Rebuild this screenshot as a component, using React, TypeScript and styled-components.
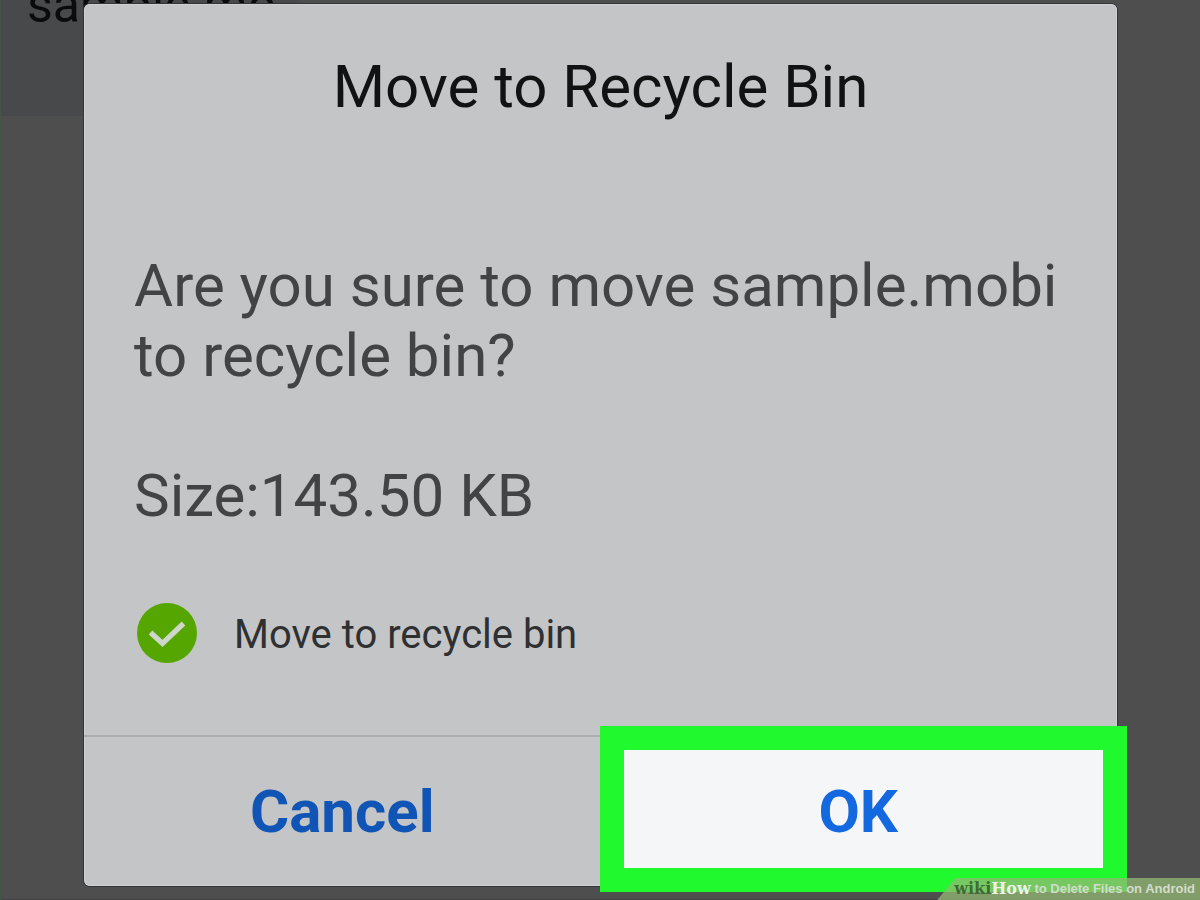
import React from "react";
import styled, { createGlobalStyle } from "styled-components";

const GlobalStyle = createGlobalStyle`
  * { box-sizing: border-box; }
  body {
    margin: 0;
    background: #4e4e4e;
    font-family: Roboto, "Liberation Sans", sans-serif;
  }
`;

const Screen = styled.div`
  position: relative;
  min-height: 100vh;
  padding: 4px 83px 13px 84px;
  overflow: hidden;
  box-shadow: inset 0 -1px 0 #434345;
`;

const FileCard = styled.div`
  position: absolute;
  top: 0;
  left: 0;
  width: 300px;
  height: 116px;
  border-left: 1px solid #56705a;
  background: #48494b;
  overflow: hidden;
`;

const FileName = styled.span`
  position: absolute;
  left: 26px;
  top: -24px;
  color: #0b0b0c;
  font-size: 50px;
  line-height: 58px;
  white-space: nowrap;
`;

const LeftEdge = styled.div`
  position: absolute;
  inset: 0 auto 0 0;
  width: 1px;
  background: #465448;
`;

const Dialog = styled.section`
  position: relative;
  border-radius: 6px;
  background: #c4c5c7;
  box-shadow: inset 0 0 0 1px #cfd0d1, 0 0 0 1px #343537;
`;

const Title = styled.h1`
  margin: 0;
  padding: 48px 24px 0;
  color: #121213;
  font-size: 60px;
  font-weight: 400;
  line-height: 70px;
  text-align: center;
`;

const Body = styled.div`
  padding: 129px 48px 70px 50px;
`;

const Message = styled.p`
  margin: 0 0 70px;
  color: #424345;
  font-size: 60px;
  line-height: 70px;
`;

const CheckRow = styled.label`
  display: flex;
  align-items: center;
  gap: 37px;
  height: 64px;
  padding-left: 3px;
  color: #2f3032;
  font-size: 40px;
  line-height: 58px;
`;

const CheckText = styled.span`
  padding-top: 4px;
`;

const CheckMark = styled.span`
  position: relative;
  width: 60px;
  height: 60px;
  flex: none;

  svg {
    position: absolute;
    inset: 0;
    pointer-events: none;
  }
`;

const CheckInput = styled.input`
  appearance: none;
  display: block;
  width: 60px;
  height: 60px;
  margin: 0;
  border-radius: 50%;
  background: #55a600;
`;

const Actions = styled.div`
  display: grid;
  grid-template-columns: 1fr 1fr;
  height: 151px;
  border-top: 2px solid #adaeb0;
`;

const ActionButton = styled.button<{ $highlighted?: boolean }>`
  padding: ${(p) => (p.$highlighted ? "6px 10px 0 0" : "0")};
  border: ${(p) => (p.$highlighted ? "24px solid #20f92d" : "0")};
  margin: ${(p) => (p.$highlighted ? "-11px -10px -6px -1px" : "0")};
  background: ${(p) => (p.$highlighted ? "#f4f6f8" : "transparent")};
  color: ${(p) => (p.$highlighted ? "#1468e0" : "#1054b6")};
  font-family: inherit;
  font-size: 60px;
  font-weight: 700;
  line-height: 70px;
`;

const Caption = styled.footer`
  position: absolute;
  right: 0;
  bottom: 0;
  height: 22px;
  padding: 0 5px 0 17px;
  display: flex;
  align-items: center;
  background: rgba(147, 184, 116, 0.75);
  clip-path: polygon(18px 0, 100% 0, 100% 100%, 0 100%);
  color: #d3dcca;
  font-family: "Liberation Sans", Arial, sans-serif;
  font-size: 13px;
  font-weight: 700;
  line-height: 22px;
  white-space: pre;
`;

const Brand = styled.span<{ $light?: boolean }>`
  color: ${(p) => (p.$light ? "#eef3e9" : "#3f6b35")};
  font-family: "DejaVu Serif", serif;
  font-size: 16px;
`;

export default function App() {
  return (
    <>
      <GlobalStyle />
      <Screen>
        <FileCard>
          <FileName>sample.mo...</FileName>
        </FileCard>
        <LeftEdge />
        <Dialog role="dialog" aria-labelledby="dialog-title">
          <Title id="dialog-title">Move to Recycle Bin</Title>
          <Body>
            <Message>Are you sure to move sample.mobi to recycle bin?</Message>
            <Message>Size:143.50 KB</Message>
            <CheckRow htmlFor="recycle">
              <CheckMark>
                <CheckInput id="recycle" type="checkbox" defaultChecked />
                <svg viewBox="0 0 60 60" aria-hidden="true">
                  <path
                    d="M13.5 29.5 L25.5 40.5 L46.5 20.5"
                    fill="none"
                    stroke="#d0d6cb"
                    strokeWidth="5.2"
                  />
                </svg>
              </CheckMark>
              <CheckText>Move to recycle bin</CheckText>
            </CheckRow>
          </Body>
          <Actions>
            <ActionButton type="button">Cancel</ActionButton>
            <ActionButton type="button" $highlighted>
              OK
            </ActionButton>
          </Actions>
        </Dialog>
        <Caption>
          <Brand>wiki</Brand>
          <Brand $light>How</Brand> to Delete Files on Android
        </Caption>
      </Screen>
    </>
  );
}
